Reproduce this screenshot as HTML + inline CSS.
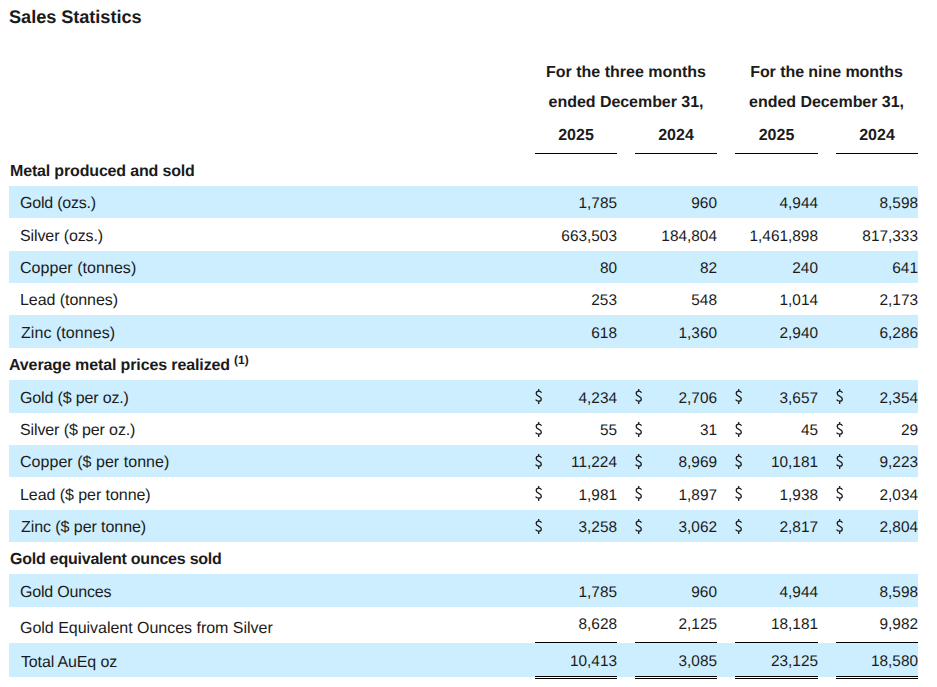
<!DOCTYPE html>
<html lang="en">
<head>
<meta charset="utf-8">
<title>Sales Statistics</title>
<style>
html,body{margin:0;padding:0;background:#fff;}
body{width:937px;height:687px;position:relative;overflow:hidden;font-family:"Liberation Sans",sans-serif;color:#1b1b1b;font-size:16px;text-rendering:geometricPrecision;}
h1{position:absolute;left:9px;top:1px;margin:0;font-size:18.2px;line-height:32px;font-weight:bold;white-space:nowrap;}
.t{position:absolute;left:9px;top:0;width:909px;}
.r{position:absolute;left:0;width:909px;white-space:nowrap;}
.r.b{background:#cceeff;}
.l{position:absolute;left:11px;top:2px;font-size:16px;}
.s{position:absolute;left:1px;top:2px;font-weight:bold;font-size:16px;}
.s sup{position:absolute;left:100%;margin-left:4px;top:-6px;font-size:12px;letter-spacing:0;}
.v{position:absolute;top:2px;text-align:right;font-size:15.4px;}
.d{position:absolute;overflow:visible;}
.d path{fill:none;stroke:#1b1b1b;stroke-width:1.3;}
.h{position:absolute;font-weight:bold;text-align:center;white-space:nowrap;}
.ln{position:absolute;height:1px;background:#000;}
.dl{position:absolute;height:3px;border-top:1px solid #000;border-bottom:1px solid #000;box-sizing:border-box;background:#fff;}
</style>
</head>
<body>
<h1 style="letter-spacing:-0.057px;">Sales Statistics</h1>
<div class="t">
<div class="h" style="left:526px;width:182px;top:58px;line-height:30px;font-size:16px;letter-spacing:0.001px;">For the three months</div>
<div class="h" style="left:526px;width:182px;top:88px;line-height:30px;font-size:16px;letter-spacing:-0.046px;">ended December 31,</div>
<div class="h" style="left:726px;width:183px;top:58px;line-height:30px;font-size:16px;letter-spacing:-0.061px;">For the nine months</div>
<div class="h" style="left:726px;width:183px;top:88px;line-height:30px;font-size:16px;letter-spacing:-0.046px;">ended December 31,</div>
<div class="h" style="left:526px;width:82px;top:121px;line-height:30px;font-size:16px;letter-spacing:-0.006px;">2025</div>
<div class="ln" style="left:526px;width:82px;top:153px"></div>
<div class="h" style="left:626px;width:82px;top:121px;line-height:30px;font-size:16px;">2024</div>
<div class="ln" style="left:626px;width:82px;top:153px"></div>
<div class="h" style="left:726px;width:83px;top:121px;line-height:30px;font-size:16px;letter-spacing:-0.006px;">2025</div>
<div class="ln" style="left:726px;width:83px;top:153px"></div>
<div class="h" style="left:827px;width:82px;top:121px;line-height:30px;font-size:16px;">2024</div>
<div class="ln" style="left:827px;width:82px;top:153px"></div>
<div class="r" style="top:154px;height:32px;line-height:32px">
<span class="s" style="letter-spacing:-0.162px;">Metal produced and sold</span>
</div>
<div class="r b" style="top:186px;height:32px;line-height:32px">
<span class="l" style="letter-spacing:-0.209px;">Gold (ozs.)</span>
<span class="v" style="left:526px;width:82px">1,785</span>
<span class="v" style="left:626px;width:82px">960</span>
<span class="v" style="left:726px;width:83px">4,944</span>
<span class="v" style="left:827px;width:82px">8,598</span>
</div>
<div class="r" style="top:218px;height:33px;line-height:33px">
<span class="l" style="letter-spacing:-0.108px;">Silver (ozs.)</span>
<span class="v" style="left:526px;width:82px">663,503</span>
<span class="v" style="left:626px;width:82px">184,804</span>
<span class="v" style="left:726px;width:83px">1,461,898</span>
<span class="v" style="left:827px;width:82px">817,333</span>
</div>
<div class="r b" style="top:251px;height:32px;line-height:32px">
<span class="l" style="letter-spacing:0.045px;">Copper (tonnes)</span>
<span class="v" style="left:526px;width:82px">80</span>
<span class="v" style="left:626px;width:82px">82</span>
<span class="v" style="left:726px;width:83px">240</span>
<span class="v" style="left:827px;width:82px">641</span>
</div>
<div class="r" style="top:283px;height:32px;line-height:32px">
<span class="l" style="letter-spacing:-0.056px;">Lead (tonnes)</span>
<span class="v" style="left:526px;width:82px">253</span>
<span class="v" style="left:626px;width:82px">548</span>
<span class="v" style="left:726px;width:83px">1,014</span>
<span class="v" style="left:827px;width:82px">2,173</span>
</div>
<div class="r b" style="top:315px;height:33px;line-height:33px">
<span class="l" style="letter-spacing:0.058px;left:12px;">Zinc (tonnes)</span>
<span class="v" style="left:526px;width:82px">618</span>
<span class="v" style="left:626px;width:82px">1,360</span>
<span class="v" style="left:726px;width:83px">2,940</span>
<span class="v" style="left:827px;width:82px">6,286</span>
</div>
<div class="r" style="top:348px;height:32px;line-height:32px">
<span class="s" style="letter-spacing:-0.118px;left:0px;">Average metal prices realized<sup>(1)</sup></span>
</div>
<div class="r b" style="top:380px;height:33px;line-height:33px">
<span class="l" style="letter-spacing:-0.148px;">Gold ($ per oz.)</span>
<svg class="d" style="left:524px;top:6px" width="12" height="20" viewBox="0 0 12 20" role="img" aria-label="$"><path d="M8.5 6.7C7.9 5.6 6.9 5.1 5.7 5.1C4.2 5.1 3.2 6.1 3.2 7.5C3.2 9 4.4 9.7 5.9 10.4C7.3 11 8.3 11.7 8.3 13C8.3 14.4 7.2 15.2 5.7 15.2C4.4 15.2 3.3 14.7 2.6 13.7M5.7 2.9V5.1M5.7 15.2V17.9"/></svg>
<span class="v" style="left:526px;width:82px">4,234</span>
<svg class="d" style="left:624px;top:6px" width="12" height="20" viewBox="0 0 12 20" role="img" aria-label="$"><path d="M8.5 6.7C7.9 5.6 6.9 5.1 5.7 5.1C4.2 5.1 3.2 6.1 3.2 7.5C3.2 9 4.4 9.7 5.9 10.4C7.3 11 8.3 11.7 8.3 13C8.3 14.4 7.2 15.2 5.7 15.2C4.4 15.2 3.3 14.7 2.6 13.7M5.7 2.9V5.1M5.7 15.2V17.9"/></svg>
<span class="v" style="left:626px;width:82px">2,706</span>
<svg class="d" style="left:724px;top:6px" width="12" height="20" viewBox="0 0 12 20" role="img" aria-label="$"><path d="M8.5 6.7C7.9 5.6 6.9 5.1 5.7 5.1C4.2 5.1 3.2 6.1 3.2 7.5C3.2 9 4.4 9.7 5.9 10.4C7.3 11 8.3 11.7 8.3 13C8.3 14.4 7.2 15.2 5.7 15.2C4.4 15.2 3.3 14.7 2.6 13.7M5.7 2.9V5.1M5.7 15.2V17.9"/></svg>
<span class="v" style="left:726px;width:83px">3,657</span>
<svg class="d" style="left:825px;top:6px" width="12" height="20" viewBox="0 0 12 20" role="img" aria-label="$"><path d="M8.5 6.7C7.9 5.6 6.9 5.1 5.7 5.1C4.2 5.1 3.2 6.1 3.2 7.5C3.2 9 4.4 9.7 5.9 10.4C7.3 11 8.3 11.7 8.3 13C8.3 14.4 7.2 15.2 5.7 15.2C4.4 15.2 3.3 14.7 2.6 13.7M5.7 2.9V5.1M5.7 15.2V17.9"/></svg>
<span class="v" style="left:827px;width:82px">2,354</span>
</div>
<div class="r" style="top:413px;height:32px;line-height:32px">
<span class="l" style="letter-spacing:-0.113px;">Silver ($ per oz.)</span>
<svg class="d" style="left:524px;top:6px" width="12" height="20" viewBox="0 0 12 20" role="img" aria-label="$"><path d="M8.5 6.7C7.9 5.6 6.9 5.1 5.7 5.1C4.2 5.1 3.2 6.1 3.2 7.5C3.2 9 4.4 9.7 5.9 10.4C7.3 11 8.3 11.7 8.3 13C8.3 14.4 7.2 15.2 5.7 15.2C4.4 15.2 3.3 14.7 2.6 13.7M5.7 2.9V5.1M5.7 15.2V17.9"/></svg>
<span class="v" style="left:526px;width:82px">55</span>
<svg class="d" style="left:624px;top:6px" width="12" height="20" viewBox="0 0 12 20" role="img" aria-label="$"><path d="M8.5 6.7C7.9 5.6 6.9 5.1 5.7 5.1C4.2 5.1 3.2 6.1 3.2 7.5C3.2 9 4.4 9.7 5.9 10.4C7.3 11 8.3 11.7 8.3 13C8.3 14.4 7.2 15.2 5.7 15.2C4.4 15.2 3.3 14.7 2.6 13.7M5.7 2.9V5.1M5.7 15.2V17.9"/></svg>
<span class="v" style="left:626px;width:82px">31</span>
<svg class="d" style="left:724px;top:6px" width="12" height="20" viewBox="0 0 12 20" role="img" aria-label="$"><path d="M8.5 6.7C7.9 5.6 6.9 5.1 5.7 5.1C4.2 5.1 3.2 6.1 3.2 7.5C3.2 9 4.4 9.7 5.9 10.4C7.3 11 8.3 11.7 8.3 13C8.3 14.4 7.2 15.2 5.7 15.2C4.4 15.2 3.3 14.7 2.6 13.7M5.7 2.9V5.1M5.7 15.2V17.9"/></svg>
<span class="v" style="left:726px;width:83px">45</span>
<svg class="d" style="left:825px;top:6px" width="12" height="20" viewBox="0 0 12 20" role="img" aria-label="$"><path d="M8.5 6.7C7.9 5.6 6.9 5.1 5.7 5.1C4.2 5.1 3.2 6.1 3.2 7.5C3.2 9 4.4 9.7 5.9 10.4C7.3 11 8.3 11.7 8.3 13C8.3 14.4 7.2 15.2 5.7 15.2C4.4 15.2 3.3 14.7 2.6 13.7M5.7 2.9V5.1M5.7 15.2V17.9"/></svg>
<span class="v" style="left:827px;width:82px">29</span>
</div>
<div class="r b" style="top:445px;height:32px;line-height:32px">
<span class="l" style="letter-spacing:0.039px;">Copper ($ per tonne)</span>
<svg class="d" style="left:524px;top:6px" width="12" height="20" viewBox="0 0 12 20" role="img" aria-label="$"><path d="M8.5 6.7C7.9 5.6 6.9 5.1 5.7 5.1C4.2 5.1 3.2 6.1 3.2 7.5C3.2 9 4.4 9.7 5.9 10.4C7.3 11 8.3 11.7 8.3 13C8.3 14.4 7.2 15.2 5.7 15.2C4.4 15.2 3.3 14.7 2.6 13.7M5.7 2.9V5.1M5.7 15.2V17.9"/></svg>
<span class="v" style="left:526px;width:82px">11,224</span>
<svg class="d" style="left:624px;top:6px" width="12" height="20" viewBox="0 0 12 20" role="img" aria-label="$"><path d="M8.5 6.7C7.9 5.6 6.9 5.1 5.7 5.1C4.2 5.1 3.2 6.1 3.2 7.5C3.2 9 4.4 9.7 5.9 10.4C7.3 11 8.3 11.7 8.3 13C8.3 14.4 7.2 15.2 5.7 15.2C4.4 15.2 3.3 14.7 2.6 13.7M5.7 2.9V5.1M5.7 15.2V17.9"/></svg>
<span class="v" style="left:626px;width:82px">8,969</span>
<svg class="d" style="left:724px;top:6px" width="12" height="20" viewBox="0 0 12 20" role="img" aria-label="$"><path d="M8.5 6.7C7.9 5.6 6.9 5.1 5.7 5.1C4.2 5.1 3.2 6.1 3.2 7.5C3.2 9 4.4 9.7 5.9 10.4C7.3 11 8.3 11.7 8.3 13C8.3 14.4 7.2 15.2 5.7 15.2C4.4 15.2 3.3 14.7 2.6 13.7M5.7 2.9V5.1M5.7 15.2V17.9"/></svg>
<span class="v" style="left:726px;width:83px">10,181</span>
<svg class="d" style="left:825px;top:6px" width="12" height="20" viewBox="0 0 12 20" role="img" aria-label="$"><path d="M8.5 6.7C7.9 5.6 6.9 5.1 5.7 5.1C4.2 5.1 3.2 6.1 3.2 7.5C3.2 9 4.4 9.7 5.9 10.4C7.3 11 8.3 11.7 8.3 13C8.3 14.4 7.2 15.2 5.7 15.2C4.4 15.2 3.3 14.7 2.6 13.7M5.7 2.9V5.1M5.7 15.2V17.9"/></svg>
<span class="v" style="left:827px;width:82px">9,223</span>
</div>
<div class="r" style="top:477px;height:33px;line-height:33px">
<span class="l" style="letter-spacing:-0.057px;">Lead ($ per tonne)</span>
<svg class="d" style="left:524px;top:6px" width="12" height="20" viewBox="0 0 12 20" role="img" aria-label="$"><path d="M8.5 6.7C7.9 5.6 6.9 5.1 5.7 5.1C4.2 5.1 3.2 6.1 3.2 7.5C3.2 9 4.4 9.7 5.9 10.4C7.3 11 8.3 11.7 8.3 13C8.3 14.4 7.2 15.2 5.7 15.2C4.4 15.2 3.3 14.7 2.6 13.7M5.7 2.9V5.1M5.7 15.2V17.9"/></svg>
<span class="v" style="left:526px;width:82px">1,981</span>
<svg class="d" style="left:624px;top:6px" width="12" height="20" viewBox="0 0 12 20" role="img" aria-label="$"><path d="M8.5 6.7C7.9 5.6 6.9 5.1 5.7 5.1C4.2 5.1 3.2 6.1 3.2 7.5C3.2 9 4.4 9.7 5.9 10.4C7.3 11 8.3 11.7 8.3 13C8.3 14.4 7.2 15.2 5.7 15.2C4.4 15.2 3.3 14.7 2.6 13.7M5.7 2.9V5.1M5.7 15.2V17.9"/></svg>
<span class="v" style="left:626px;width:82px">1,897</span>
<svg class="d" style="left:724px;top:6px" width="12" height="20" viewBox="0 0 12 20" role="img" aria-label="$"><path d="M8.5 6.7C7.9 5.6 6.9 5.1 5.7 5.1C4.2 5.1 3.2 6.1 3.2 7.5C3.2 9 4.4 9.7 5.9 10.4C7.3 11 8.3 11.7 8.3 13C8.3 14.4 7.2 15.2 5.7 15.2C4.4 15.2 3.3 14.7 2.6 13.7M5.7 2.9V5.1M5.7 15.2V17.9"/></svg>
<span class="v" style="left:726px;width:83px">1,938</span>
<svg class="d" style="left:825px;top:6px" width="12" height="20" viewBox="0 0 12 20" role="img" aria-label="$"><path d="M8.5 6.7C7.9 5.6 6.9 5.1 5.7 5.1C4.2 5.1 3.2 6.1 3.2 7.5C3.2 9 4.4 9.7 5.9 10.4C7.3 11 8.3 11.7 8.3 13C8.3 14.4 7.2 15.2 5.7 15.2C4.4 15.2 3.3 14.7 2.6 13.7M5.7 2.9V5.1M5.7 15.2V17.9"/></svg>
<span class="v" style="left:827px;width:82px">2,034</span>
</div>
<div class="r b" style="top:510px;height:32px;line-height:32px">
<span class="l" style="letter-spacing:-0.067px;left:12px;">Zinc ($ per tonne)</span>
<svg class="d" style="left:524px;top:6px" width="12" height="20" viewBox="0 0 12 20" role="img" aria-label="$"><path d="M8.5 6.7C7.9 5.6 6.9 5.1 5.7 5.1C4.2 5.1 3.2 6.1 3.2 7.5C3.2 9 4.4 9.7 5.9 10.4C7.3 11 8.3 11.7 8.3 13C8.3 14.4 7.2 15.2 5.7 15.2C4.4 15.2 3.3 14.7 2.6 13.7M5.7 2.9V5.1M5.7 15.2V17.9"/></svg>
<span class="v" style="left:526px;width:82px">3,258</span>
<svg class="d" style="left:624px;top:6px" width="12" height="20" viewBox="0 0 12 20" role="img" aria-label="$"><path d="M8.5 6.7C7.9 5.6 6.9 5.1 5.7 5.1C4.2 5.1 3.2 6.1 3.2 7.5C3.2 9 4.4 9.7 5.9 10.4C7.3 11 8.3 11.7 8.3 13C8.3 14.4 7.2 15.2 5.7 15.2C4.4 15.2 3.3 14.7 2.6 13.7M5.7 2.9V5.1M5.7 15.2V17.9"/></svg>
<span class="v" style="left:626px;width:82px">3,062</span>
<svg class="d" style="left:724px;top:6px" width="12" height="20" viewBox="0 0 12 20" role="img" aria-label="$"><path d="M8.5 6.7C7.9 5.6 6.9 5.1 5.7 5.1C4.2 5.1 3.2 6.1 3.2 7.5C3.2 9 4.4 9.7 5.9 10.4C7.3 11 8.3 11.7 8.3 13C8.3 14.4 7.2 15.2 5.7 15.2C4.4 15.2 3.3 14.7 2.6 13.7M5.7 2.9V5.1M5.7 15.2V17.9"/></svg>
<span class="v" style="left:726px;width:83px">2,817</span>
<svg class="d" style="left:825px;top:6px" width="12" height="20" viewBox="0 0 12 20" role="img" aria-label="$"><path d="M8.5 6.7C7.9 5.6 6.9 5.1 5.7 5.1C4.2 5.1 3.2 6.1 3.2 7.5C3.2 9 4.4 9.7 5.9 10.4C7.3 11 8.3 11.7 8.3 13C8.3 14.4 7.2 15.2 5.7 15.2C4.4 15.2 3.3 14.7 2.6 13.7M5.7 2.9V5.1M5.7 15.2V17.9"/></svg>
<span class="v" style="left:827px;width:82px">2,804</span>
</div>
<div class="r" style="top:542px;height:32px;line-height:32px">
<span class="s" style="letter-spacing:-0.229px;">Gold equivalent ounces sold</span>
</div>
<div class="r b" style="top:574px;height:33px;line-height:33px">
<span class="l" style="letter-spacing:-0.197px;">Gold Ounces</span>
<span class="v" style="left:526px;width:82px">1,785</span>
<span class="v" style="left:626px;width:82px">960</span>
<span class="v" style="left:726px;width:83px">4,944</span>
<span class="v" style="left:827px;width:82px">8,598</span>
</div>
<div class="r" style="top:607px;height:36px;line-height:36px">
<span class="l" style="letter-spacing:-0.021px;top:4px;">Gold Equivalent Ounces from Silver</span>
<span class="v" style="left:526px;width:82px;top:0">8,628</span>
<span class="v" style="left:626px;width:82px;top:0">2,125</span>
<span class="v" style="left:726px;width:83px;top:0">18,181</span>
<span class="v" style="left:827px;width:82px;top:0">9,982</span>
</div>
<div class="ln" style="left:526px;width:82px;top:642px"></div>
<div class="ln" style="left:626px;width:82px;top:642px"></div>
<div class="ln" style="left:726px;width:83px;top:642px"></div>
<div class="ln" style="left:827px;width:82px;top:642px"></div>
<div class="r b" style="top:643px;height:34px;line-height:34px">
<span class="l" style="letter-spacing:-0.142px;top:3px;left:12px;">Total AuEq oz</span>
<span class="v" style="left:526px;width:82px">10,413</span>
<span class="v" style="left:626px;width:82px">3,085</span>
<span class="v" style="left:726px;width:83px">23,125</span>
<span class="v" style="left:827px;width:82px">18,580</span>
</div>
<div class="dl" style="left:526px;width:82px;top:676px"></div>
<div class="dl" style="left:626px;width:82px;top:676px"></div>
<div class="dl" style="left:726px;width:83px;top:676px"></div>
<div class="dl" style="left:827px;width:82px;top:676px"></div>
</div>
</body>
</html>
